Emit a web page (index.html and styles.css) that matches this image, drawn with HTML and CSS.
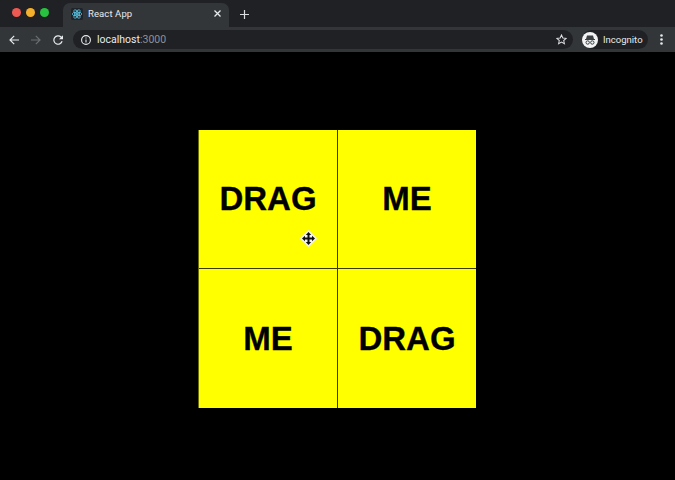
FILE: index.html
```html
<!DOCTYPE html>
<html lang="en">
<head>
<meta charset="utf-8">
<title>React App</title>
<link rel="stylesheet" href="styles.css">
</head>
<body>
<div class="chrome">
  <div class="tabstrip">
    <div class="lights">
      <span class="light red"></span><span class="light amber"></span><span class="light green"></span>
    </div>
    <div class="tab">
      <svg class="favicon" width="12" height="12" viewBox="0 0 16 16" fill="none" stroke="#61dafb" stroke-width="0.9"><rect width="16" height="16" rx="2" fill="#20232a" stroke="none"/><ellipse cx="8" cy="8" rx="6.500" ry="2.500"/><ellipse cx="8" cy="8" rx="6.500" ry="2.500" transform="rotate(60 8 8)"/><ellipse cx="8" cy="8" rx="6.500" ry="2.500" transform="rotate(120 8 8)"/><circle cx="8" cy="8" r="1.300" fill="#61dafb" stroke="none"/></svg>
      <span class="tab-title">React App</span>
      <svg class="tab-close" width="7" height="7" viewBox="0 0 7 7" stroke="#e8eaed" stroke-width="1.300"><path d="M.5.5l6 6M6.500.5l-6 6"/></svg>
    </div>
    <svg class="newtab" width="9" height="9" viewBox="0 0 9 9" stroke="#dadce0" stroke-width="1.200"><path d="M4.500 0v9M0 4.500h9"/></svg>
  </div>
  <div class="toolbar">
    <svg class="nav" width="10" height="10" viewBox="0 0 10 10" fill="none" stroke="#e8eaed" stroke-width="1.200"><path d="M10 5H1M5.200.8L1 5l4.200 4.200"/></svg>
    <svg class="nav" width="10" height="10" viewBox="0 0 10 10" fill="none" stroke="#6c6e71" stroke-width="1.200"><path d="M0 5h9M4.800.8L9 5 4.800 9.200"/></svg>
    <svg class="nav" width="10" height="10" viewBox="0 0 10 10" fill="none" stroke="#e8eaed" stroke-width="1.200"><path d="M9.100 6.300A4.200 4.200 0 1 1 8 2L9.500 3.500"/><path d="M10 .3v4H6z" fill="#e8eaed" stroke="none"/></svg>
    <div class="omnibox">
      <svg class="info" width="10" height="10" viewBox="0 0 10 10" fill="none" stroke="#e8eaed" stroke-width="1.100"><circle cx="5" cy="5" r="4.400"/><path d="M5 4.400v3M5 2.400v1.100"/></svg>
      <span class="host">localhost</span><span class="port">:3000</span>
      <svg class="star" width="11" height="11" viewBox="0 0 12 12" fill="none" stroke="#dadce0" stroke-width="1.100"><path d="M6 1l1.500 3.300 3.600.4-2.700 2.400.8 3.500L6 8.800l-3.200 1.800.8-3.500L.9 4.700l3.600-.4z"/></svg>
    </div>
    <div class="profile">
      <svg width="16" height="16" viewBox="0 0 16 16"><circle cx="8" cy="8" r="8" fill="#f1f3f4"/><path d="M3 7h10v1H3zM5 3.500h6l1 3.500H4z" fill="#3c4043"/><circle cx="5.700" cy="10.500" r="1.700" fill="none" stroke="#3c4043"/><circle cx="10.300" cy="10.500" r="1.700" fill="none" stroke="#3c4043"/></svg>
      <span class="profile-name">Incognito</span>
    </div>
    <svg class="menu" width="3" height="11" viewBox="0 0 3 11" fill="#e8eaed"><circle cx="1.500" cy="1.500" r="1.300"/><circle cx="1.500" cy="5.500" r="1.300"/><circle cx="1.500" cy="9.500" r="1.300"/></svg>
  </div>
</div>
<main class="viewport">
  <div class="grid">
    <div class="cell">DRAG</div>
    <div class="cell">ME</div>
    <div class="cell">ME</div>
    <div class="cell">DRAG</div>
  </div>
  <svg class="cursor" width="17" height="17" viewBox="0 0 17 17"><path d="M8.500 0L17 8.500 8.500 17 0 8.500z" fill="#f4f4ee"/><path d="M8.500 2l2.700 3h-1.700v2.500H12V5.800l3 2.700-3 2.700V9.500H9.500V12h1.700l-2.700 3-2.700-3h1.700V9.500H5v1.700l-3-2.700 3-2.700v1.700h2.500V5H5.800z" fill="#111"/></svg>
</main>
</body>
</html>
```
FILE: styles.css
```css
* { box-sizing: border-box; }
html, body { margin: 0; height: 100%; background: #000; overflow: hidden; }
body { font-family: "Liberation Sans", Arial, sans-serif; display: flex; flex-direction: column; }
.chrome { flex: none; }
.tabstrip { height: 27px; background: #202124; display: flex; align-items: flex-end; padding-left: 12px; }
.lights { display: flex; gap: 5px; align-self: flex-start; margin-top: 8px; }
.light { width: 9px; height: 9px; border-radius: 50%; }
.red { background: #ee5a52; }
.amber { background: #f6b12c; }
.green { background: #28c33f; }
.tab { width: 166px; height: 24px; margin-left: 14px; background: #323639; border-radius: 7px 7px 0 0; display: flex; align-items: center; padding: 0 8px 3px 8px; color: #e8eaed; font: 9.500px "Roboto", "Liberation Sans", sans-serif; }
.favicon { flex: none; }
.tab-title { margin-left: 5px; flex: 1; letter-spacing: 0.100px; }
.tab-close { flex: none; }
.newtab { margin: 0 0 8px 11px; }
.toolbar { height: 25px; background: #323639; display: flex; align-items: center; padding: 0 12px 0 9px; }
.nav { flex: none; margin-right: 12px; }
.omnibox { flex: 1; height: 19px; margin: 0 9px 0 -2px; border-radius: 10px; background: #202124; display: flex; align-items: center; padding: 0 6px 0 8px; font: 10.500px "Roboto", "Liberation Sans", sans-serif; }
.info { margin-right: 6px; }
.host { color: #e8eaed; }
.port { color: #8f9296; }
.star { margin-left: auto; }
.profile { width: 66px; height: 19px; border-radius: 10px; background: #202124; display: flex; align-items: center; padding-left: 0; gap: 5px; color: #e8eaed; font: 9.500px "Roboto", "Liberation Sans", sans-serif; }
.menu { margin-left: 12px; }
.viewport { flex: 1; position: relative; display: flex; justify-content: center; padding: 78px 1px 0 0; }
.grid { width: 278px; height: 278px; display: grid; grid-template-columns: 139px 138px; grid-template-rows: 1fr 1fr; background: #ffff00; border-left: 1px solid #6b6b00; }
.cell { display: flex; align-items: center; justify-content: center; font-size: 33px; font-weight: 700; -webkit-text-stroke: 0.300px #000; color: #000; border: 0 solid #3a3a00; }
.cell:nth-child(odd) { border-right-width: 1px; }
.cell:nth-child(-n+2) { border-bottom-width: 1px; }
.cursor { position: absolute; left: 300px; top: 178px; }
```
